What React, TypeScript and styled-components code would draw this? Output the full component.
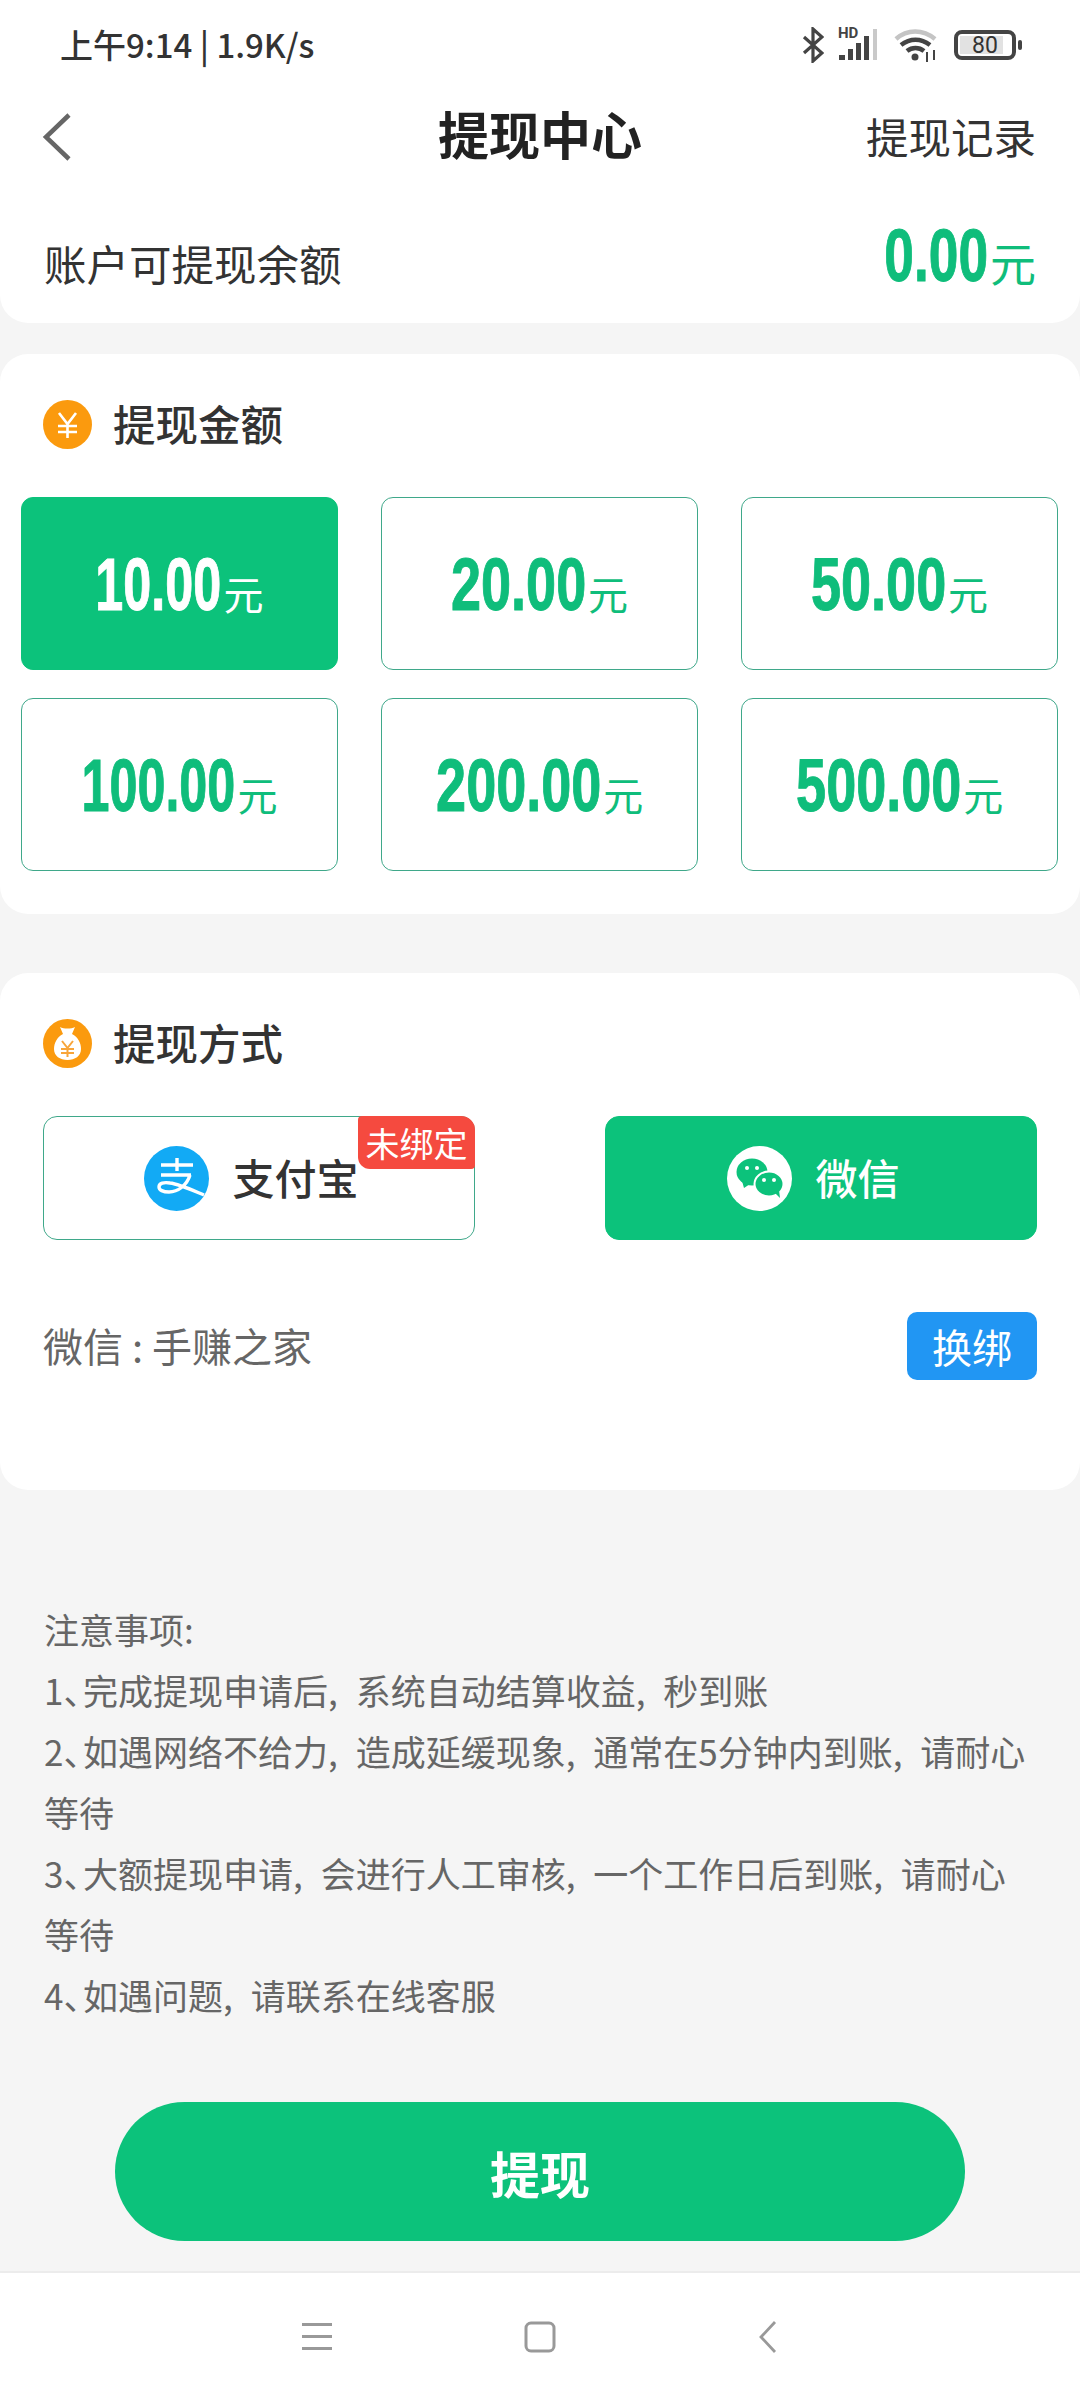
import { createGlobalStyle } from "styled-components";
import styled from "styled-components";

const amounts = ["10.00", "20.00", "50.00", "100.00", "200.00", "500.00"];
const notes = [
  "注意事项:",
  "1、\u200A完成提现申请后, 系统自动结算收益, 秒到账",
  "2、\u200A如遇网络不给力, 造成延缓现象, 通常在5分钟内到账, 请耐心等待",
  "3、\u200A大额提现申请, 会进行人工审核, 一个工作日后到账, 请耐心等待",
  "4、\u200A如遇问题, 请联系在线客服",
];

function StatusIcons() {
  return (
    <StatusRight>
      <svg width="22" height="36" viewBox="0 0 22 36" fill="none" stroke="#444" strokeWidth="3.200">
        <path d="M2 10l18 16-9 8V2l9 8L2 26" />
      </svg>
      <Signal>
        <HdLabel>HD</HdLabel>
        <svg width="42" height="34" viewBox="0 0 42 34" fill="#444">
          <rect x="1" y="27" width="6" height="5" />
          <rect x="10" y="21" width="5" height="11" />
          <rect x="18" y="15" width="5" height="17" />
          <rect x="26" y="8" width="5" height="24" />
          <rect x="35" y="1" width="4" height="31" fill="#c9c9c9" />
        </svg>
      </Signal>
      <svg width="44" height="34" viewBox="0 0 44 34" fill="none" strokeWidth="4.500">
        <path d="M2 11C13 1 29 1 41 11" stroke="#c4c4c4" />
        <path d="M7 17c9-7 20-7 29 0" stroke="#444" />
        <path d="M13 23c5-4 12-4 17 0" stroke="#444" />
        <circle cx="21" cy="29" r="3.500" fill="#444" stroke="none" />
        <path d="M33 24v10M40 22v10" stroke="#444" strokeWidth="2" />
      </svg>
      <BatteryWrap>
        <Battery>
          <BatteryFill style={{ width: "80%" }} />
          <BatteryText>80</BatteryText>
        </Battery>
        <BatteryCap />
      </BatteryWrap>
    </StatusRight>
  );
}

function YuanIcon() {
  return (
    <svg width="49" height="49" viewBox="0 0 49 49">
      <circle cx="24.5" cy="24.5" r="24.5" fill="#fb9a0e" />
      <path d="M16 13l8.500 11 8.500-11M15 26h19M15 32h19M24.500 24v14" fill="none" stroke="#fff" strokeWidth="2.600" />
    </svg>
  );
}

function BagIcon() {
  return (
    <svg width="49" height="49" viewBox="0 0 49 49">
      <circle cx="24.5" cy="24.5" r="24.5" fill="#fb9a0e" />
      <path d="M17 8c4 2 11 2 15 0l-3 7c6 3 9 9 9 15 0 7-6 11-13.500 11S11 37 11 30c0-6 3-12 9-15z" fill="#fff" />
      <path d="M19 22l5.500 7 5.500-7M18 30h13M18 34h13M24.500 29v9" fill="none" stroke="#f8a53a" strokeWidth="2" />
    </svg>
  );
}

function AlipayIcon() {
  return (
    <svg width="65" height="65" viewBox="0 0 65 65">
      <circle cx="32.5" cy="32.5" r="32.500" fill="#12aaf5" />
      <path
        d="M17 19h32M33 12v13M17 29h30M46 29c-3 10-12 17-21 17-6 0-10-2-10-5 0-4 5-5 11-4 9 1 22 7 34 12"
        fill="none"
        stroke="#fff"
        strokeWidth="3.400"
      />
    </svg>
  );
}

function WechatIcon() {
  return (
    <svg width="65" height="65" viewBox="0 0 65 65">
      <circle cx="32.5" cy="32.5" r="32.500" fill="#fff" />
      <ellipse cx="25" cy="26" rx="15.500" ry="13.500" fill="#0cc27b" />
      <path d="M15 35l2 7 6-4z" fill="#0cc27b" />
      <ellipse cx="42" cy="38" rx="14.500" ry="12.500" fill="#0cc27b" stroke="#fff" strokeWidth="2" />
      <path d="M48 47l5 5-1-8z" fill="#0cc27b" />
      <circle cx="20" cy="22" r="2" fill="#fff" />
      <circle cx="30" cy="22" r="2" fill="#fff" />
      <circle cx="37" cy="34" r="2" fill="#fff" />
      <circle cx="47" cy="34" r="2" fill="#fff" />
    </svg>
  );
}

function App() {
  return (
    <Page>
      <GlobalStyle />
      <TopCard>
        <StatusBar>
          <StatusText>上午9:14 | 1.9K/s</StatusText>
          <StatusIcons />
        </StatusBar>
        <Header>
          <BackBtn>
            <svg width="30" height="50" viewBox="0 0 30 50" fill="none" stroke="#666" strokeWidth="4.500">
              <path d="M27 3L4 25l23 22" />
            </svg>
          </BackBtn>
          <Title>提现中心</Title>
          <Record>提现记录</Record>
        </Header>
        <BalanceRow>
          <BalanceLabel>账户可提现余额</BalanceLabel>
          <Price>
            <Digits $color="#0fbd7b" $scale={0.72} $len={4}>0.00</Digits>
            <Unit $color="#0fbd7b" $big>元</Unit>
          </Price>
        </BalanceRow>
      </TopCard>

      <AmountCard>
        <SectionTitle>
          <YuanIcon />
          <SectionLabel>提现金额</SectionLabel>
        </SectionTitle>
        <AmountGrid>
          {amounts.map((a, i) => (
            <AmountBtn key={a} $active={i === 0}>
              <Digits $color={i === 0 ? "#fff" : "#0fbd7b"} $scale={a.startsWith("1") ? 0.68 : 0.73} $len={a.length}>{a}</Digits>
              <Unit $color={i === 0 ? "#fff" : "#0fbd7b"}>元</Unit>
            </AmountBtn>
          ))}
        </AmountGrid>
      </AmountCard>

      <MethodCard>
        <SectionTitle>
          <BagIcon />
          <SectionLabel>提现方式</SectionLabel>
        </SectionTitle>
        <MethodRow>
          <MethodBtn>
            <AlipayIcon />
            <MethodLabel>支付宝</MethodLabel>
            <Badge>未绑定</Badge>
          </MethodBtn>
          <MethodBtn $active>
            <WechatIcon />
            <MethodLabel>微信</MethodLabel>
          </MethodBtn>
        </MethodRow>
        <AccountRow>
          <AccountText>微信 : 手赚之家</AccountText>
          <RebindBtn>换绑</RebindBtn>
        </AccountRow>
      </MethodCard>

      <Notes>
        {notes.map((n) => (
          <div key={n}>{n}</div>
        ))}
      </Notes>

      <WithdrawBtn>提现</WithdrawBtn>

      <NavBar>
        <svg width="30" height="30" viewBox="0 0 30 30" fill="#999">
          <rect y="1" width="30" height="3" />
          <rect y="13" width="30" height="3" />
          <rect y="25" width="30" height="3" />
        </svg>
        <svg width="32" height="32" viewBox="0 0 32 32" fill="none" stroke="#999" strokeWidth="3">
          <rect x="2" y="2" width="28" height="28" rx="5" />
        </svg>
        <svg width="29" height="32" viewBox="0 0 29 32" fill="none" stroke="#999" strokeWidth="2.800">
          <path d="M27 1L13 16l14 15" />
        </svg>
      </NavBar>
    </Page>
  );
}

export default App;

const GlobalStyle = createGlobalStyle`
  html, body {
    margin: 0;
    padding: 0;
    background: #f5f5f5;
  }
  * {
    box-sizing: border-box;
  }
`;

const Page = styled.div`
  width: 1080px;
  height: 2400px;
  background: #f5f5f5;
  font-family: "Noto Sans CJK SC", "Noto Sans", sans-serif;
  display: flex;
  flex-direction: column;
  overflow: hidden;
`;

const TopCard = styled.div`
  height: 323px;
  background: #fff;
  border-radius: 0 0 28px 28px;
`;

const StatusBar = styled.div`
  height: 90px;
  padding: 0 58px 0 60px;
  display: flex;
  align-items: center;
  justify-content: space-between;
`;

const StatusText = styled.div`
  margin-bottom: 2px;
  font-size: 33px;
  font-weight: 500;
  color: #333;
`;

const StatusRight = styled.div`
  display: flex;
  align-items: center;
  gap: 14px;
`;

const Signal = styled.div`
  position: relative;
  height: 34px;
`;

const HdLabel = styled.span`
  position: absolute;
  top: -2px;
  left: 0;
  font-family: Roboto, sans-serif;
  font-size: 15px;
  font-weight: 700;
  line-height: 15px;
  color: #444;
`;

const BatteryWrap = styled.div`
  display: flex;
  align-items: center;
  gap: 2px;
  margin-left: 2px;
`;

const Battery = styled.div`
  position: relative;
  width: 62px;
  height: 30px;
  border: 4px solid #444;
  border-radius: 8px;
  display: flex;
  align-items: center;
  justify-content: center;
`;

const BatteryFill = styled.div`
  position: absolute;
  top: 2px;
  bottom: 2px;
  left: 2px;
  background: #e2e2e2;
`;

const BatteryText = styled.span`
  position: relative;
  font-family: Roboto, sans-serif;
  font-size: 23px;
  color: #333;
  line-height: 1;
`;

const BatteryCap = styled.div`
  width: 4px;
  height: 10px;
  background: #444;
  border-radius: 2px;
`;

const Header = styled.div`
  height: 94px;
  padding: 0 44px 0 42px;
  display: flex;
  align-items: center;
  justify-content: space-between;
  position: relative;
`;

const BackBtn = styled.div`
  width: 30px;
  height: 50px;
`;

const Title = styled.div`
  position: absolute;
  left: 0;
  right: 0;
  top: 18px;
  line-height: 50px;
  text-align: center;
  font-size: 51px;
  font-weight: 700;
  color: #222;
`;

const Record = styled.div`
  position: relative;
  margin-bottom: 3px;
  font-size: 42.5px;
  color: #333;
`;

const BalanceRow = styled.div`
  margin-top: 38px;
  padding: 0 44px;
  height: 80px;
  display: flex;
  align-items: center;
  justify-content: space-between;
`;

const BalanceLabel = styled.div`
  font-size: 42.5px;
  color: #333;
`;

const Price = styled.div`
  display: flex;
  align-items: baseline;
  margin-bottom: 12px;
`;

const Digits = styled.span<{ $color: string; $scale: number; $len: number }>`
  display: inline-block;
  font-family: "Liberation Sans", Arial, sans-serif;
  font-weight: 700;
  font-size: 74px;
  color: ${(p) => p.$color};
  -webkit-text-stroke: 1px ${(p) => p.$color};
  line-height: 1;
  transform: scaleX(${(p) => p.$scale});
  transform-origin: right center;
  margin-left: ${(p) => -(1 - p.$scale) * ((p.$len - 1) * 0.556 + 0.278)}em;
`;

const Unit = styled.span<{ $color: string; $big?: boolean }>`
  font-size: ${(p) => (p.$big ? "46px" : "40px")};
  margin-left: 2px;
  color: ${(p) => p.$color};
  line-height: 1;
`;

const AmountCard = styled.div`
  height: 560px;
  margin-top: 31px;
  padding-top: 46px;
  background: #fff;
  border-radius: 28px;
`;

const SectionTitle = styled.div`
  height: 49px;
  padding-left: 43px;
  display: flex;
  align-items: center;
  gap: 21px;
`;

const SectionLabel = styled.span`
  margin-bottom: 4px;
  font-size: 42.5px;
  font-weight: 500;
  color: #333;
`;

const AmountGrid = styled.div`
  margin-top: 48px;
  padding: 0 22px 0 21px;
  display: grid;
  grid-template-columns: repeat(3, 1fr);
  column-gap: 43px;
  row-gap: 28px;
`;

const AmountBtn = styled.div<{ $active?: boolean }>`
  height: 173px;
  border-radius: 12px;
  border: 1px solid ${(p) => (p.$active ? "#0cc27b" : "#3fa88a")};
  background: ${(p) => (p.$active ? "#0cc27b" : "#fff")};
  display: flex;
  align-items: baseline;
  justify-content: center;
  padding-top: 50px;
`;

const MethodCard = styled.div`
  height: 517px;
  margin-top: 59px;
  padding-top: 46px;
  background: #fff;
  border-radius: 28px;
`;

const MethodRow = styled.div`
  margin-top: 48px;
  padding: 0 43px;
  display: flex;
  justify-content: space-between;
`;

const MethodBtn = styled.div<{ $active?: boolean }>`
  position: relative;
  width: 432px;
  height: 124px;
  padding-right: 15px;
  border-radius: 14px;
  border: 1px solid ${(p) => (p.$active ? "#0cc27b" : "#3fa88a")};
  background: ${(p) => (p.$active ? "#0cc27b" : "#fff")};
  color: ${(p) => (p.$active ? "#fff" : "#333")};
  display: flex;
  align-items: center;
  justify-content: center;
  gap: 23px;
`;

const MethodLabel = styled.span`
  margin-bottom: 3px;
  font-size: 42px;
  font-weight: 500;
`;

const Badge = styled.div`
  position: absolute;
  top: -1px;
  right: -1px;
  width: 117px;
  height: 53px;
  background: #f54a3f;
  border-radius: 4px 14px 4px 12px;
  color: #fff;
  font-size: 34px;
  font-weight: 400;
  display: flex;
  align-items: center;
  justify-content: center;
`;

const AccountRow = styled.div`
  margin-top: 72px;
  padding: 0 43px;
  display: flex;
  align-items: center;
  justify-content: space-between;
`;

const AccountText = styled.div`
  margin-bottom: 2px;
  font-size: 40px;
  color: #666;
`;

const RebindBtn = styled.div`
  width: 130px;
  height: 68px;
  background: #2196f3;
  border-radius: 10px;
  color: #fff;
  font-size: 40px;
  display: flex;
  align-items: center;
  justify-content: center;
`;

const Notes = styled.div`
  margin-top: 108px;
  padding: 0 44px;
  font-size: 35px;
  line-height: 61px;
  word-spacing: 10px;
  font-feature-settings: "halt";
  color: #666;
`;

const WithdrawBtn = styled.div`
  width: 850px;
  height: 139px;
  margin: 77px auto 0;
  border-radius: 70px;
  background: #0cc27b;
  color: #fff;
  font-size: 50px;
  font-weight: 700;
  display: flex;
  align-items: center;
  justify-content: center;
`;

const NavBar = styled.div`
  margin-top: auto;
  height: 129px;
  background: #fff;
  border-top: 2px solid #ececec;
  padding-left: 302px;
  display: flex;
  align-items: center;
  gap: 192px;
`;
